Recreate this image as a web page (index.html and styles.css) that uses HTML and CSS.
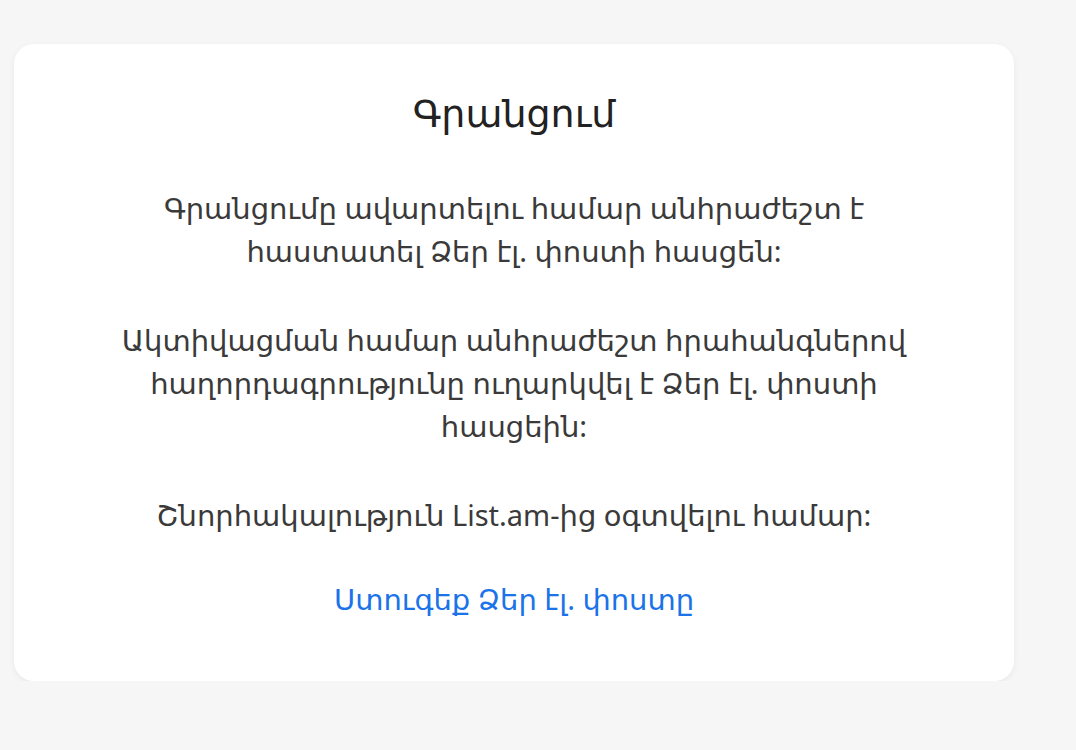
FILE: index.html
```html
<!DOCTYPE html>
<html lang="hy">
<head>
<meta charset="utf-8">
<link rel="stylesheet" href="styles.css">
</head>
<body>
<div class="card">
  <h1 class="title">Գրանցում</h1>
  <div class="msg">
    <p>Գրանցումը ավարտելու համար անհրաժեշտ է հաստատել Ձեր էլ. փոստի հասցեն:</p>
    <p>Ակտիվացման համար անհրաժեշտ հրահանգներով հաղորդագրությունը ուղարկվել է Ձեր էլ. փոստի հասցեին:</p>
    <p>Շնորհակալություն List.am-ից օգտվելու համար:</p>
    <p class="last"><a class="link" href="#">Ստուգեք Ձեր էլ. փոստը</a></p>
  </div>
</div>
</body>
</html>
```

FILE: styles.css
```css
html, body { margin: 0; padding: 0; }
body {
  background: #f6f6f6;
  font-family: "Noto Sans", "DejaVu Sans", sans-serif;
  color: #3a3a3a;
  padding: 44px 62px 0 14px;
}
.card {
  width: 1000px;
  box-sizing: border-box;
  background: #fff;
  border-radius: 20px;
  box-shadow: 0 2px 6px rgba(0,0,0,0.06);
  padding: 45px 100px 61px;
  text-align: center;
}
.title {
  margin: 0 0 51px;
  font-size: 38px;
  font-weight: 400;
  line-height: 46px;
  color: #222;
}
.msg { font-size: 29px; line-height: 43px; }
.msg p { margin: 0 0 46px; }
.msg p.last { margin: -5px 0 0; }
.link { color: #1a73e8; text-decoration: none; }
```
